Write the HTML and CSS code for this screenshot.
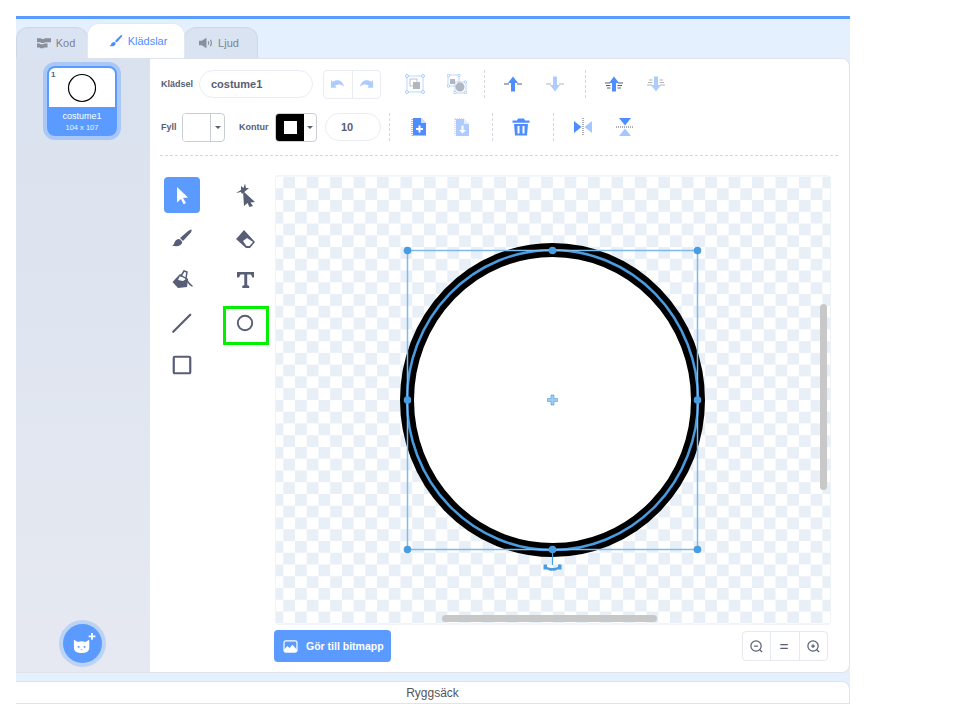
FILE: index.html
```html
<!DOCTYPE html>
<html lang="sv">
<head>
<meta charset="utf-8">
<title>Klädslar</title>
<link rel="stylesheet" href="styles.css">
</head>
<body>
<div class="app">
  <div class="tabs">
    <div class="tab tab-kod">
      <svg class="tab-icon" viewBox="0 0 16 12"><path fill="#8a8f9c" d="M0 .5h4.500l1 1h2.500l1-1h7v4.500H9l-1 1H5l-1-1H0zM0 6.500h3l1 1h3.500l1-1h3.500v4.500H8l-1 1H4l-1-1H0z"/></svg>
      <span>Kod</span>
    </div>
    <div class="tab tab-active">
      <svg class="tab-icon" viewBox="0 0 16 14"><path fill="#4d8dff" d="M15 .3c.6.5.3 1.200-.2 1.800L9.600 8c-.6.600-1.300.600-1.900.100-.6-.5-.7-1.200-.1-1.900L13 .8c.6-.6 1.400-1 2-.5zM6.800 8.500c.8.700 1 1.800.3 2.800-1.200 1.700-4.300 2.200-6.600 1.400 1.300-.5 1.700-1.300 2-2.400.3-1.300 2.700-3 4.300-1.800z"/></svg>
      <span>Klädslar</span>
    </div>
    <div class="tab tab-ljud">
      <svg class="tab-icon" viewBox="0 0 15 12"><path fill="#8a8f9c" d="M0 3.500h3L8 .5v11l-5-3H0z"/><path fill="none" stroke="#8a8f9c" stroke-width="1.200" d="M10 4q1 2 0 4M12.300 2.500q2 3.500 0 7"/></svg>
      <span>Ljud</span>
    </div>
  </div>

  <div class="main">
    <aside class="sidebar">
      <div class="costume">
        <div class="thumb">
          <span class="thumb-num">1</span>
          <svg class="thumb-img" viewBox="0 0 30 30"><circle cx="15" cy="15" r="13.500" fill="#fff" stroke="#000" stroke-width="1.200"/></svg>
        </div>
        <div class="costume-label">
          <span class="costume-name">costume1</span>
          <span class="costume-size">104 x 107</span>
        </div>
      </div>
      <div class="add-btn">
        <svg viewBox="0 0 26 24" class="add-icon"><path fill="#fff" d="M3 8l4 2.500q4-1.500 8 0L19 8v9q0 5-8 5T3 17z"/><path fill="#5b99ff" d="M7 14.500h1.800v2H7zM13.200 14.500H15v2h-1.800zM10 18h2l-1 1z"/><path fill="#fff" d="M21 1h1.800v2.600h2.600v1.800h-2.600V8H21V5.400h-2.600V3.600H21z"/></svg>
      </div>
    </aside>

    <section class="panel">
      <div class="row">
        <span class="label label-name">Klädsel</span>
        <div class="field field-name">costume1</div>
        <div class="undo-group">
          <div class="undo-cell">
            <svg viewBox="0 0 16 12" class="undo-icon"><path fill="#4d8dff" d="M1 1l1.500 2.800C4 2.500 6 2 8 2c3.500 0 6 2.500 7 7-1.800-2-4-2.500-6.500-2.300-1.300.1-2.200.3-3 .8L7 10H1z"/></svg>
          </div>
          <div class="undo-cell">
            <svg viewBox="0 0 16 12" class="undo-icon flip"><path fill="#4d8dff" d="M1 1l1.500 2.800C4 2.500 6 2 8 2c3.500 0 6 2.500 7 7-1.800-2-4-2.500-6.500-2.300-1.300.1-2.200.3-3 .8L7 10H1z"/></svg>
          </div>
        </div>
        <div class="cell first-a dim">
          <svg viewBox="0 0 20 20" class="icon"><rect x="2" y="2" width="16" height="16" fill="none" stroke="#4d8dff" stroke-width=".8"/><rect x="5" y="5" width="7" height="7" fill="#fff" stroke="#575e75" stroke-width=".8"/><rect x="8" y="8" width="7" height="7" fill="#575e75"/><g fill="#fff" stroke="#4d8dff"><circle cx="2" cy="2" r="1.500"/><circle cx="18" cy="2" r="1.500"/><circle cx="2" cy="18" r="1.500"/><circle cx="18" cy="18" r="1.500"/></g></svg>
        </div>
        <div class="cell dim">
          <svg viewBox="0 0 20 20" class="icon"><rect x="1" y="1" width="11" height="11" fill="none" stroke="#4d8dff" stroke-width=".8"/><rect x="8" y="8" width="11" height="11" fill="none" stroke="#4d8dff" stroke-width=".8"/><circle cx="13" cy="13" r="4.500" fill="#575e75"/><rect x="3" y="5" width="5" height="5" fill="#575e75"/><g fill="#fff" stroke="#4d8dff"><circle cx="1.500" cy="1.500" r="1.300"/><circle cx="12" cy="1.500" r="1.300"/><circle cx="1.500" cy="12" r="1.300"/><circle cx="18.500" cy="8" r="1.300"/><circle cx="8" cy="18.500" r="1.300"/><circle cx="18.500" cy="18.500" r="1.300"/></g></svg>
        </div>
        <i class="sep sep-a"></i>
        <div class="cell cell-b">
          <svg viewBox="0 0 20 20" class="icon"><path fill="none" stroke="#575e75" stroke-width="1.200" d="M1 10h5M14 10h5"/><path fill="#4d8dff" d="M10 2.500L15 9h-3v8.500H8V9H5z"/></svg>
        </div>
        <div class="cell dim">
          <svg viewBox="0 0 20 20" class="icon"><path fill="none" stroke="#575e75" stroke-width="1.200" d="M1 10h5M14 10h5"/><path fill="#4d8dff" d="M10 17.500L15 11h-3V2.500H8V11H5z"/></svg>
        </div>
        <i class="sep sep-c"></i>
        <div class="cell cell-d">
          <svg viewBox="0 0 20 20" class="icon"><path fill="none" stroke="#575e75" stroke-width="1.100" d="M1 9h5M14 9h5M2 11.500h4.500M13.500 11.500H18M3 14h3.500M13.500 14H17"/><path fill="#4d8dff" d="M10 2.500L15 9h-3v8.500H8V9H5z"/></svg>
        </div>
        <div class="cell dim">
          <svg viewBox="0 0 20 20" class="icon"><path fill="none" stroke="#575e75" stroke-width="1.100" d="M3 6h3.500M13.500 6H17M2 8.500h4.500M13.500 8.500H18M1 11h5M14 11h5"/><path fill="#4d8dff" d="M10 17.500L15 11h-3V2.500H8V11H5z"/></svg>
        </div>
      </div>

      <div class="row row-two">
        <span class="label label-fill">Fyll</span>
        <div class="swatch swatch-fill">
          <div class="swatch-color"></div>
          <div class="swatch-arrow"><i class="caret"></i></div>
        </div>
        <span class="label label-stroke">Kontur</span>
        <div class="swatch swatch-stroke">
          <div class="swatch-color black"><i class="hole"></i></div>
          <div class="swatch-arrow"><i class="caret"></i></div>
        </div>
        <div class="field field-num">10</div>
        <i class="sep sep-e"></i>
        <div class="cell wide">
          <svg viewBox="0 0 20 20" class="icon"><path fill="none" stroke="#575e75" stroke-width=".8" stroke-dasharray="1 1" d="M3 2v16.500h14"/><path fill="#4d8dff" d="M4 1h8l5 5v12H4z"/><path fill="#fff" d="M12 1l5 5h-5z" opacity=".7"/><path fill="#fff" d="M9.500 8.500h2v2.500H14v2h-2.500v2.500h-2V13H7v-2h2.500z"/></svg>
        </div>
        <div class="cell wide dim">
          <svg viewBox="0 0 20 20" class="icon"><path fill="none" stroke="#575e75" stroke-width=".8" stroke-dasharray="1 1" d="M3 2v16.500M3 2h9"/><path fill="#4d8dff" d="M4 2h8l5 5v12H4z"/><path fill="#fff" d="M12 2l5 5h-5z" opacity=".7"/><path fill="#fff" d="M9.500 8.500h2V13H14l-3.500 3.500L7 13h2.500z"/></svg>
        </div>
        <i class="sep sep-f"></i>
        <div class="cell cell-g">
          <svg viewBox="0 0 20 20" class="icon"><path fill="#4d8dff" d="M7 1.500h6l1 2h4.500v2.200h-17V3.500H6zM3 7h14l-1 11.500H4zM6.500 9v7.500h2V9zm5 0v7.500h2V9z"/></svg>
        </div>
        <i class="sep sep-h"></i>
        <div class="cell cell-i">
          <svg viewBox="0 0 20 20" class="icon"><path fill="#4d8dff" d="M1 4l7.500 6L1 16z"/><path fill="#4d8dff" opacity=".5" d="M19 4l-7.500 6 7.500 6z"/><path stroke="#575e75" stroke-width="1" stroke-dasharray="1 1" d="M10 1v18"/></svg>
        </div>
        <div class="cell">
          <svg viewBox="0 0 20 20" class="icon"><path fill="#4d8dff" d="M4 1l6 7.500L16 1z"/><path fill="#4d8dff" opacity=".5" d="M4 19l6-7.500 6 7.500z"/><path stroke="#575e75" stroke-width="1" stroke-dasharray="1 1" d="M1 10h18"/></svg>
        </div>
      </div>

      <div class="divider"></div>

      <div class="work">
        <div class="tools">
          <div class="tool tool-active">
            <svg viewBox="0 0 20 20" class="tool-icon"><path fill="#fff" d="M5 2l11 10.500-5 .4 3 5-2.400 1.300-2.600-5.200L5 17.500z"/></svg>
          </div>
          <div class="tool">
            <svg viewBox="0 0 24 24" class="tool-icon huge"><path fill="#575e75" d="M10 8l12 11-4.500.5 2.500 3.500-3.500 1-2-4-3.500 3z"/><path fill="#575e75" d="M3 10l5-3V3l2.500 2L12 .5 13 5h3l-3.500 3L9 11l-1-2z"/></svg>
          </div>
          <div class="tool">
            <svg viewBox="0 0 22 22" class="tool-icon big"><path fill="#575e75" d="M20.500 2.500c.5 1.500-.5 3-2 4.500L12 14l-3-3 7-6c1.500-1.200 3.500-2.500 4.500-2.500zM8 12c1.500.5 3 2 3.300 3.500-1 3-5 5-10.300 3 1.500-.5 2-1.500 2.500-3 .8-2 2.500-3.500 4.500-3.500z"/></svg>
          </div>
          <div class="tool">
            <svg viewBox="0 0 22 22" class="tool-icon big"><path fill="#575e75" d="M4 10l6-7 11 12-5 6h-4L2 12z"/><path fill="#fff" d="M9 14l4-3 6 4-3.500 4h-3z"/></svg>
          </div>
          <div class="tool">
            <svg viewBox="0 0 22 22" class="tool-icon big"><path fill="#575e75" d="M1.500 13L9 5l8 5-1 8-9 1z"/><path fill="#fff" d="M9 7l6 3-3 2-5-1z"/><path fill="none" stroke="#575e75" stroke-width="1.500" stroke-linecap="round" d="M10 7l3-5 3 1-1 6c1 3 3 6 6 8"/></svg>
          </div>
          <div class="tool">
            <svg viewBox="0 0 22 22" class="tool-icon big"><path fill="#575e75" d="M3 3h17v5.500h-1.600L17 5.500h-3.800V16l2 1v2H8.300v-2l2-1V5.500H6.500L5 8.500H3z"/></svg>
          </div>
          <div class="tool">
            <svg viewBox="0 0 20 20" class="tool-icon big"><path fill="none" stroke="#575e75" stroke-width="2" stroke-linecap="round" d="M2 18L17.500 2.500"/></svg>
          </div>
          <div class="tool tool-marked">
            <svg viewBox="0 0 20 20" class="tool-icon big"><circle cx="10" cy="10" r="7.200" fill="none" stroke="#575e75" stroke-width="1.900"/></svg>
          </div>
          <div class="tool">
            <svg viewBox="0 0 20 20" class="tool-icon big"><rect x="2.500" y="2.500" width="15" height="15" rx="1" fill="none" stroke="#575e75" stroke-width="2"/></svg>
          </div>
        </div>

        <div class="stage-col">
          <div class="stage">
            <svg class="art" viewBox="0 0 556 450">
              <ellipse cx="277.500" cy="225" rx="145.500" ry="150" fill="#fff" stroke="#000" stroke-width="14"/>
              <ellipse cx="277.500" cy="225" rx="145.500" ry="150" fill="none" stroke="#4a9ce0" stroke-width="2.500"/>
              <rect x="132.500" y="75.500" width="290" height="299" fill="none" stroke="#7dbbee" stroke-width="1.500"/>
              <path d="M277.500 375v15" stroke="#4a9ce0" stroke-width="1.200"/>
              <g fill="#4a9ce0">
                <circle cx="132.500" cy="75.500" r="3.800"/><circle cx="277.500" cy="75.500" r="3.800"/><circle cx="422.500" cy="75.500" r="3.800"/>
                <circle cx="132.500" cy="225" r="3.800"/><circle cx="422.500" cy="225" r="3.800"/>
                <circle cx="132.500" cy="374.500" r="3.800"/><circle cx="277.500" cy="374.500" r="3.800"/><circle cx="422.500" cy="374.500" r="3.800"/>
              </g>
              <path d="M276 220h3v3.500h3.500v3H279v3.500h-3v-3.500h-3.500v-3h3.500z" fill="#9fcbf2" stroke="#4a9ce0" stroke-width=".6"/>
              <path d="M268.500 389.500h3.500v2.500q5.500 2 11 0v-2.500h3.500v5h-4q-3 2-5 1-2.500 1-5-1h-4z" fill="#4a9ce0"/>
            </svg>
            <div class="scroll scroll-v"></div>
            <div class="scroll scroll-h"></div>
          </div>
          <div class="stage-foot">
            <div class="bitmap-btn">
              <svg viewBox="0 0 16 14" class="bitmap-icon"><path fill="none" stroke="#fff" stroke-width="1.300" d="M1 3q0-2 2-2h10q2 0 2 2v8q0 2-2 2H3q-2 0-2-2z"/><path fill="#fff" d="M1 10.500l3.500-4 2.500 2 3-3.500 5 5.500v2.500H1z"/></svg>
              <span>Gör till bitmapp</span>
            </div>
            <div class="zoom-group">
              <div class="zoom-cell"><svg viewBox="0 0 16 16" class="zoom-icon"><circle cx="7.500" cy="7.500" r="5.500" fill="none" stroke="#575e75" stroke-width="1.300"/><path d="M11.500 11.500L14 14M5.500 7.500h4" stroke="#575e75" stroke-width="1.300" fill="none"/></svg></div>
              <div class="zoom-cell"><svg viewBox="0 0 16 16" class="zoom-icon"><path d="M3.500 6h8M3.500 10h8" stroke="#575e75" stroke-width="1.500" fill="none"/></svg></div>
              <div class="zoom-cell"><svg viewBox="0 0 16 16" class="zoom-icon"><circle cx="7.500" cy="7.500" r="5.500" fill="none" stroke="#575e75" stroke-width="1.300"/><path d="M11.500 11.500L14 14M5.500 7.500h4M7.500 5.500v4" stroke="#575e75" stroke-width="1.300" fill="none"/></svg></div>
            </div>
          </div>
        </div>
      </div>
    </section>
  </div>

  <div class="backpack">Ryggsäck</div>
</div>
</body>
</html>
```

FILE: styles.css
```css
* { box-sizing: border-box; }

html, body { margin: 0; background: #fff; }

body {
  font-family: "Liberation Sans", Arial, sans-serif;
  color: #575e75;
  height: 720px;
  overflow: hidden;
}

.app {
  margin: 16px 0 0 16px;
  width: 834px;
  height: 688px;
  background: #e5f0ff;
  border-top: 3px solid #5b9bff;
  display: flex;
  flex-direction: column;
}

/* tabs */
.tabs {
  height: 39px;
  display: flex;
  align-items: flex-end;
  flex: none;
}

.tab {
  height: 31px;
  display: flex;
  align-items: center;
  justify-content: center;
  gap: 5px;
  font-size: 11px;
  color: #7d8393;
  background: #d9e3f2;
  border: 1px solid #d0d8e6;
  border-bottom: 0;
  border-radius: 12px 12px 0 0;
}

.tab-kod { width: 72px; padding-left: 8px; }
.tab-ljud { width: 74px; margin-left: -1px; padding-right: 4px; }

.tab-active {
  width: 98px;
  height: 35px;
  margin-left: -1px;
  padding-left: 4px;
  background: #fff;
  color: #4d8dff;
  border-color: #e2e8f2;
  position: relative;
  z-index: 1;
}

.tab-icon { width: 14px; height: 12px; }

/* main */
.main {
  height: 615px;
  display: flex;
  flex: none;
}

.sidebar {
  width: 134px;
  flex: none;
  background: linear-gradient(#dae2ef, #e6e9f1);
  border-bottom: 1px solid #dfe3ea;
  padding: 8px 0 9px;
  display: flex;
  flex-direction: column;
}

.costume {
  width: 70px;
  height: 70px;
  margin-left: 31px;
  border: 2px solid #5b9bff;
  border-radius: 8px;
  box-shadow: 0 0 0 4px #a9c8f7;
  background: #5b9bff;
  overflow: hidden;
  display: flex;
  flex-direction: column;
}

.thumb {
  height: 39px;
  background: #fff;
  display: flex;
  align-items: center;
  justify-content: center;
  position: relative;
  flex: none;
}

.thumb-num {
  position: absolute;
  left: 2px;
  top: 2px;
  font-size: 8px;
  font-weight: 700;
  color: #575e75;
}

.thumb-img { width: 30px; height: 30px; }

.costume-label {
  flex: 1;
  display: flex;
  flex-direction: column;
  align-items: center;
  color: #fff;
  padding-top: 4px;
}

.costume-name { font-size: 9px; line-height: 11px; }
.costume-size { font-size: 7.5px; line-height: 11px; opacity: .9; }

.add-btn {
  margin: auto 0 0 47px;
  width: 39px;
  height: 39px;
  border-radius: 50%;
  background: #5b9bff;
  box-shadow: 0 0 0 4px #bdd3f4;
  display: flex;
  align-items: center;
  justify-content: center;
}

.add-icon { width: 25px; height: 23px; margin-left: 2px; }

/* panel */
.panel {
  flex: 1;
  background: #fff;
  border-right: 1px solid #dfe3ea;
  border-bottom: 1px solid #dfe3ea;
  border-top: 1px solid #dfe3ea;
  border-radius: 0 8px 8px 0;
  padding: 11px 0 0 10px;
  min-width: 0;
}

.row {
  height: 28px;
  display: flex;
  align-items: center;
}

.row-two { margin-top: 15px; }

.label {
  font-size: 9px;
  font-weight: 700;
  color: #575e75;
  flex: none;
}

.label-name { width: 39px; padding-left: 1px; }
.label-fill { width: 22px; padding-left: 1px; }
.label-stroke { width: 36px; margin-left: 14px; }

.field {
  height: 28px;
  border: 1px solid #e9edf3;
  border-radius: 14px;
  font-size: 11px;
  font-weight: 700;
  color: #575e75;
  display: flex;
  align-items: center;
  flex: none;
}

.field-name { width: 114px; padding-left: 11px; }
.field-num { width: 56px; margin-left: 8px; padding-left: 15px; }

.undo-group {
  width: 58px;
  height: 29px;
  margin-left: 10px;
  border: 1px solid #e9edf3;
  border-radius: 4px;
  display: flex;
  flex: none;
}

.undo-cell {
  flex: 1;
  display: flex;
  align-items: center;
  justify-content: center;
}

.undo-cell + .undo-cell { border-left: 1px solid #e9edf3; }

.undo-icon { width: 15px; height: 12px; opacity: .45; }
.flip { transform: scaleX(-1); }

.cell {
  width: 42px;
  height: 28px;
  display: flex;
  align-items: center;
  justify-content: center;
  flex: none;
}

.wide { width: 43px; }
.first-a { margin-left: 13px; }
.dim { opacity: .45; }

.icon { width: 20px; height: 20px; }

.sep {
  width: 0;
  height: 28px;
  border-left: 1px dashed #d5d8de;
  flex: none;
}

.sep-a { margin-left: 6px; }
.cell-b { margin-left: 7px; }
.sep-c { margin-left: 9px; }
.cell-d { margin-left: 7px; }
.sep-e { margin-left: 8px; }
.row-two .sep-e + .cell { margin-left: 7px; }
.sep-f { margin-left: 9px; }
.cell-g { margin-left: 7px; }
.sep-h { margin-left: 11px; }
.cell-i { margin-left: 8px; }

.swatch {
  width: 43px;
  height: 29px;
  border: 1px solid #c9cdd6;
  border-radius: 4px;
  display: flex;
  flex: none;
  overflow: hidden;
}

.swatch-stroke { width: 42px; }

.swatch-color {
  width: 28px;
  background: #fff;
  border-right: 1px solid #c9cdd6;
  display: flex;
  align-items: center;
  justify-content: center;
  flex: none;
}

.black { background: #000; border-right: 0; }

.hole {
  width: 13px;
  height: 13px;
  background: #fff;
}

.swatch-arrow {
  flex: 1;
  display: flex;
  align-items: center;
  justify-content: center;
}

.caret {
  width: 0;
  height: 0;
  border-left: 3.500px solid transparent;
  border-right: 3.500px solid transparent;
  border-top: 3.500px solid #575e75;
}

.divider {
  margin: 14px 11px 0 0;
  border-top: 1px dashed #d5d8de;
}

/* tools */
.work {
  margin-top: 19px;
  display: flex;
}

.tools {
  width: 115px;
  flex: none;
  padding: 2px 0 0 4px;
  display: grid;
  grid-template-columns: 36px 36px;
  grid-auto-rows: 36px;
  column-gap: 27px;
  row-gap: 6.500px;
  align-content: start;
}

.tool {
  display: flex;
  align-items: center;
  justify-content: center;
  border-radius: 4px;
  position: relative;
}

.tool-active { background: #5b9bff; }

.tool-icon { width: 20px; height: 20px; }
.big { width: 22px; height: 22px; }
.huge { width: 24px; height: 24px; }

.tool-marked .big { width: 20px; height: 20px; }

.tool-marked::after {
  content: "";
  position: absolute;
  box-sizing: border-box;
  left: -4px;
  top: 1px;
  width: 46px;
  height: 39px;
  border: 3px solid #00f000;
}

/* stage */
.stage-col { width: 556px; flex: none; }

.stage {
  width: 556px;
  height: 450px;
  position: relative;
  border-radius: 4px;
  overflow: hidden;
  background-color: #fff;
  background-image: conic-gradient(#e9eff7 25%, #fff 0 50%, #e9eff7 0 75%, #fff 0);
  background-size: 23.440px 23.520px;
  background-position: -3.420px 1.500px;
  box-shadow: inset 0 0 0 1px #f0f3f7;
}

.art {
  display: block;
  width: 556px;
  height: 450px;
}

.scroll {
  position: absolute;
  background: #c8c8c8;
  border-radius: 4px;
}

.scroll-v { left: 545px; top: 129px; width: 7px; height: 186px; }
.scroll-h { left: 167px; top: 440px; width: 215px; height: 7px; }

.stage-foot {
  display: flex;
  justify-content: space-between;
  align-items: flex-start;
  margin-top: 5px;
  padding-right: 3px;
}

.bitmap-btn {
  width: 117px;
  height: 32px;
  margin-left: -1px;
  background: #5b9bff;
  border-radius: 4px;
  display: flex;
  align-items: center;
  gap: 8px;
  padding-left: 9px;
  color: #fff;
  font-size: 10.500px;
  font-weight: 700;
}

.bitmap-icon { width: 15px; height: 13px; flex: none; }

.zoom-group {
  width: 86px;
  height: 30px;
  margin-top: 1px;
  border: 1px solid #e6e9ef;
  border-radius: 4px;
  display: flex;
}

.zoom-cell {
  flex: 1;
  display: flex;
  align-items: center;
  justify-content: center;
}

.zoom-cell + .zoom-cell { border-left: 1px solid #e6e9ef; }

.zoom-icon { width: 15px; height: 15px; }

/* backpack */
.backpack {
  margin-top: 8px;
  height: 23px;
  background: #fff;
  border: 1px solid #e0e3ea;
  border-left: 0;
  border-radius: 0 8px 0 0;
  display: flex;
  align-items: center;
  justify-content: center;
  font-size: 12px;
  color: #555;
  flex: none;
}
```
